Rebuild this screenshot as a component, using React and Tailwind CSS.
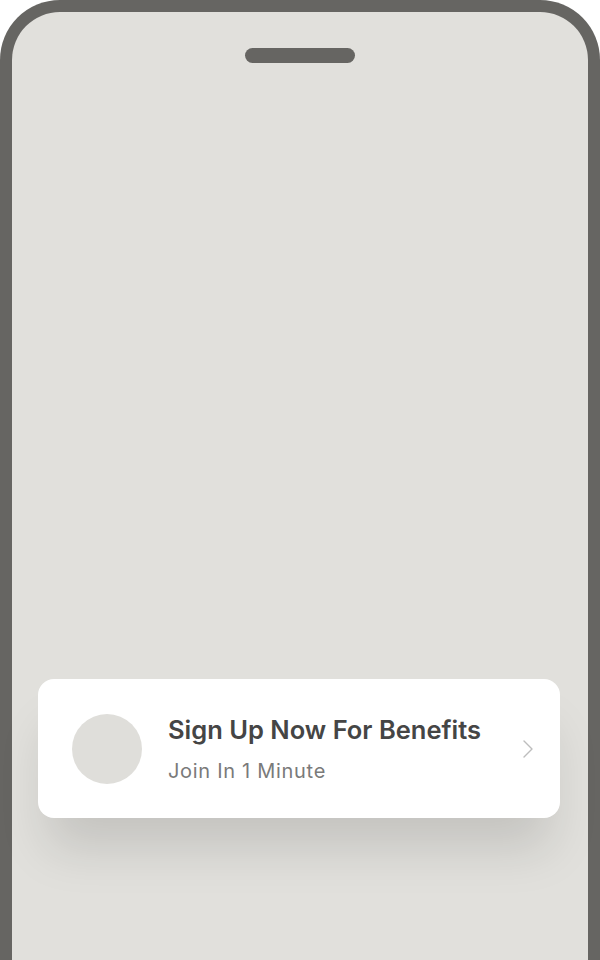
import React from "react";

const App = () => {
  return (
    <div className="w-[600px] h-[960px] overflow-hidden bg-white" style={{ fontFamily: "Inter, 'Noto Sans', sans-serif" }}>
      <div className="bg-[#666562] rounded-t-[60px] pt-[12px] px-[12px] h-[1000px]">
        <div className="bg-[#e1e0dc] rounded-t-[48px] h-full flex flex-col">
          <div className="mt-[36px] mx-auto w-[110px] h-[15px] rounded-full bg-[#666562]" />
          <div className="mt-[616px] ml-[26px] mr-[28px] h-[139px] bg-white rounded-[16px] flex items-center pl-[34px] pr-[26px] shadow-[0_40px_50px_-10px_rgba(0,0,0,0.13)]">
            <div className="w-[70px] h-[70px] rounded-full bg-[#dfdeda] shrink-0" />
            <div className="ml-[26px] flex-1 flex flex-col">
              <div className="text-[25.5px] leading-[30px] font-semibold text-[#454545]">
                Sign Up Now For Benefits
              </div>
              <div className="mt-[14px] text-[20px] leading-[24px] tracking-[0.7px] text-[#7a7a7a]">
                Join In 1 Minute
              </div>
            </div>
            <svg width="12" height="20" viewBox="0 0 12 20" className="shrink-0">
              <path d="M2 2 L10 10 L2 18" fill="none" stroke="#bdbdbd" strokeWidth="1.4" strokeLinecap="round" strokeLinejoin="round" />
            </svg>
          </div>
        </div>
      </div>
    </div>
  );
};

export default App;
